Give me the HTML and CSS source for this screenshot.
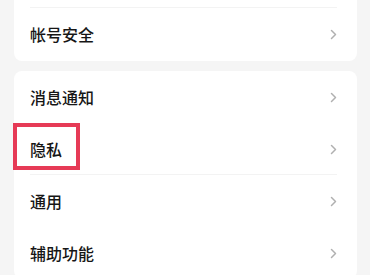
FILE: index.html
```html
<!DOCTYPE html>
<html lang="zh">
<head>
<meta charset="utf-8">
<link rel="stylesheet" href="styles.css">
</head>
<body>
<div class="page">
  <div class="card card-first">
    <div class="row row-cut divided"></div>
    <div class="row"><span class="label">帐号安全</span><svg class="chev" viewBox="0 0 7 11"><polyline points="1.5,1.5 5.5,5.5 1.5,9.5"/></svg></div>
  </div>
  <div class="card card-second">
    <div class="row"><span class="label">消息通知</span><svg class="chev" viewBox="0 0 7 11"><polyline points="1.5,1.5 5.5,5.5 1.5,9.5"/></svg></div>
    <div class="row divided"><span class="label">隐私</span><svg class="chev" viewBox="0 0 7 11"><polyline points="1.5,1.5 5.5,5.5 1.5,9.5"/></svg></div>
    <div class="row"><span class="label">通用</span><svg class="chev" viewBox="0 0 7 11"><polyline points="1.5,1.5 5.5,5.5 1.5,9.5"/></svg></div>
    <div class="row"><span class="label">辅助功能</span><svg class="chev" viewBox="0 0 7 11"><polyline points="1.5,1.5 5.5,5.5 1.5,9.5"/></svg></div>
    <div class="highlight"></div>
  </div>
</div>
</body>
</html>
```
FILE: styles.css
```css
html, body {
  margin: 0;
  padding: 0;
  background: #f5f5f5;
  overflow: hidden;
}
body {
  font-family: "Noto Sans CJK SC", "Noto Sans", sans-serif;
  color: #161616;
}
.page {
  display: flex;
  flex-direction: column;
  gap: 10px;
}
.card {
  margin: 0 13px 0 14px;
  background: #ffffff;
  border-radius: 8px;
  position: relative;
}
.card-first {
  padding-bottom: 1px;
  border-radius: 0 0 8px 8px;
}
.row {
  height: 52px;
  box-sizing: border-box;
  display: flex;
  align-items: center;
  justify-content: space-between;
  padding: 0 20px 0 16px;
  position: relative;
}
.row.row-cut {
  height: 8px;
}
.row.divided::after {
  content: "";
  position: absolute;
  left: 16px;
  right: 20px;
  bottom: 0;
  height: 1px;
  background: #f3f3f3;
}
.label {
  font-size: 16px;
  font-weight: 500;
  line-height: 1;
}
.chev {
  width: 7px;
  height: 11px;
  fill: none;
  stroke: #b0b0b0;
  stroke-width: 1.5;
  stroke-linecap: round;
  stroke-linejoin: round;
}
.highlight {
  position: absolute;
  left: -1px;
  top: 52px;
  width: 67px;
  height: 47px;
  box-sizing: border-box;
  border: 4px solid #e63a56;
}
```
